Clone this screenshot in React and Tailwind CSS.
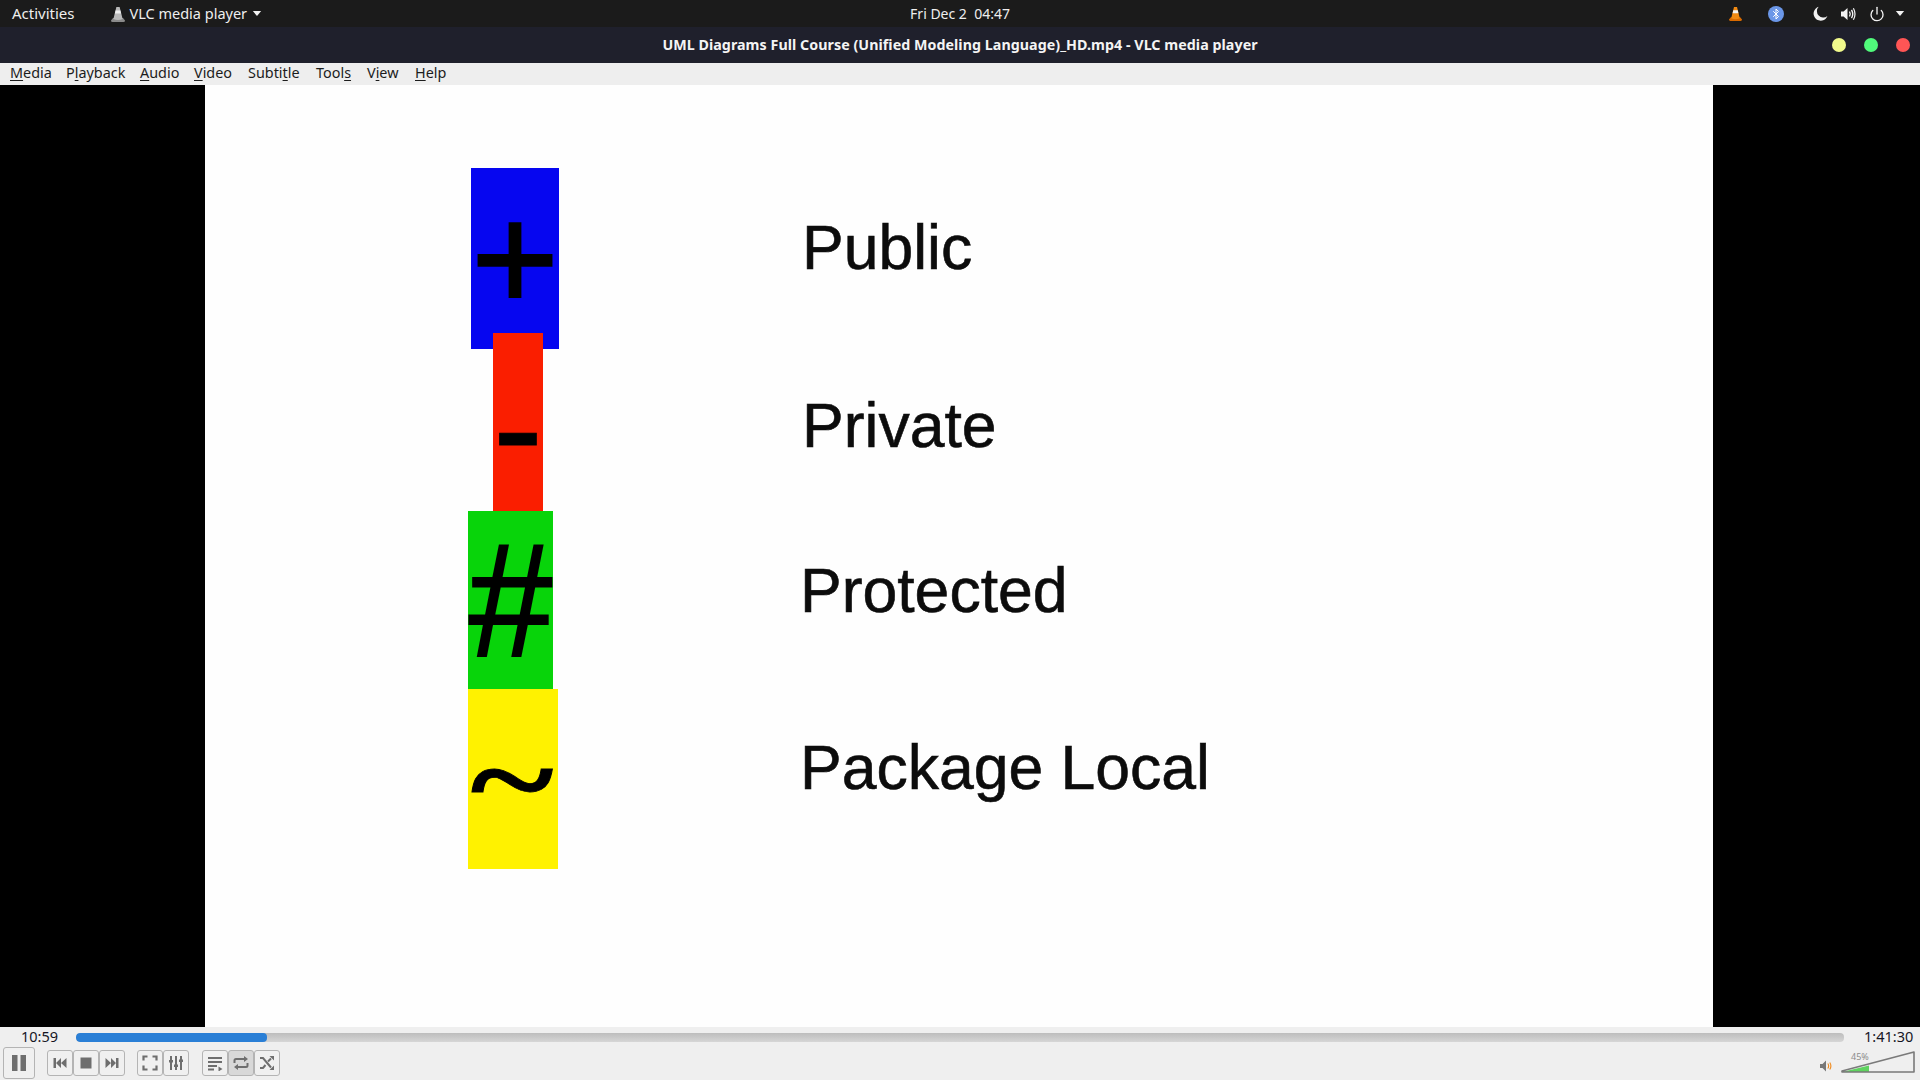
import React from "react";
import { Bluetooth, Power } from "lucide-react";

const ui = { fontFamily: '"Noto Sans", sans-serif' };

function Cone({ gray, className }) {
  const main = gray ? "#b9b9b9" : "#f28a12";
  const dark = gray ? "#8a8a8a" : "#d96a00";
  const band = gray ? "#eeeeee" : "#f4f4f4";
  return (
    <svg viewBox="0 0 16 16" className={className}>
      <path d="M1 14.5 L3 12 H13 L15 14.5 Q15 16 13.5 16 H2.5 Q1 16 1 14.5Z" fill={dark} />
      <path d="M6.4 1 H9.6 L12.6 13 Q8 15 3.4 13Z" fill={main} />
      <path d="M5.6 4.6 H10.4 L11.1 7.6 H4.9Z" fill={band} />
    </svg>
  );
}

function Caret({ className }) {
  return (
    <svg viewBox="0 0 10 6" className={className}>
      <path d="M0 0 H10 L5 6Z" fill="#f2f2f2" />
    </svg>
  );
}

function TopBar() {
  return (
    <div className="flex h-[27px] items-center bg-[#1b1b1b] text-[14.5px] text-[#eeeeee]" style={ui}>
      <div className="flex flex-1 items-center pl-[15px]">
        <span className="-ml-[3px] text-[15px]">Activities</span>
        <Cone gray className="ml-[35px] h-[16px] w-[16px]" />
        <span className="ml-[4px]">VLC media player</span>
        <Caret className="ml-[5px] h-[5px] w-[10px]" />
      </div>
      <div className="whitespace-pre text-[14px]">Fri Dec 2  04:47</div>
      <div className="flex flex-1 items-center justify-end pr-[15px]">
        <Cone className="h-[17px] w-[15px]" />
        <span className="ml-[25px] flex h-[16px] w-[16px] items-center justify-center rounded-full bg-[#6b97e8]">
          <Bluetooth size={12} color="#ffffff" strokeWidth={2} />
        </span>
        <svg viewBox="0 0 16 16" className="ml-[29px] h-[15px] w-[15px]">
          <path d="M6 0.8 A7.6 7.6 0 1 0 15.4 10.6 A6.8 6.8 0 0 1 6 0.8Z" fill="#f2f2f2" />
        </svg>
        <svg viewBox="0 0 16 16" className="ml-[12px] h-[16px] w-[16px]" fill="none" stroke="#f2f2f2">
          <path d="M1 5.5 H3.6 L7.5 2 V14 L3.6 10.5 H1Z" fill="#f2f2f2" stroke="none" />
          <path d="M9.5 5.5 Q11 8 9.5 10.5" strokeWidth="1.4" />
          <path d="M11.5 3.8 Q14 8 11.5 12.2" strokeWidth="1.4" />
          <path d="M13.4 2.2 Q16.6 8 13.4 13.8" strokeWidth="1.2" />
        </svg>
        <Power size={16} color="#f2f2f2" strokeWidth={2} className="ml-[13px]" />
        <Caret className="ml-[10px] h-[5px] w-[10px]" />
      </div>
    </div>
  );
}

function TitleBar() {
  return (
    <div className="flex h-[36px] items-center bg-[#1f202c] pb-[1px]" style={ui}>
      <div className="flex-1 pl-[10px]" />
      <div className="text-[14.25px] font-bold tracking-[0.05px] text-[#f4f4f4]">
        UML Diagrams Full Course (Unified Modeling Language)_HD.mp4 - VLC media player
      </div>
      <div className="flex flex-1 items-center justify-end gap-[18px] pr-[10px] pt-[1px]">
        <span className="h-[14px] w-[14px] rounded-full bg-[#f1fa8c]" />
        <span className="h-[14px] w-[14px] rounded-full bg-[#50fa7b]" />
        <span className="h-[14px] w-[14px] rounded-full bg-[#ff5555]" />
      </div>
    </div>
  );
}

function MenuBar() {
  const items = [
    ["", "M", "edia", 42],
    ["P", "l", "ayback", 60],
    ["", "A", "udio", 40],
    ["", "V", "ideo", 40],
    ["Subti", "t", "le", 54],
    ["Tool", "s", "", 37],
    ["V", "i", "ew", 34],
    ["", "H", "elp", 32],
  ];
  return (
    <div className="flex h-[22px] items-center gap-[14px] bg-[#eeeeee] pb-[2px] pl-[10px] text-[14.4px] text-[#1c1c1c]" style={ui}>
      {items.map(([a, b, c, w]) => (
        <span key={a + b + c} className="whitespace-nowrap" style={{ width: w }}>
          {a}
          <u className="underline-offset-2">{b}</u>
          {c}
        </span>
      ))}
    </div>
  );
}

function Block({ className, glyph, glyphClass }) {
  return (
    <div className={`relative flex items-center justify-center overflow-visible ${className}`}>
      <span className={`leading-none text-black ${glyphClass}`}>{glyph}</span>
    </div>
  );
}

function Slide() {
  const sans = { fontFamily: '"Liberation Sans", Arial, sans-serif' };
  return (
    <div className="ml-[205px] flex h-full w-[1508px] bg-[#fefefe]" style={sans}>
      <div className="flex w-[597px] flex-col pt-[83px]">
        <Block className="ml-[266px] h-[181px] w-[88px] bg-[#0606f0]" glyph="+" glyphClass="text-[150px] -mt-[2px] [-webkit-text-stroke:2px_#000]" />
        <Block className="z-10 -mt-[16px] ml-[288px] h-[178px] w-[50px] bg-[#fa1e00]" glyph="-" glyphClass="text-[150px] mt-[10px] [-webkit-text-stroke:1px_#000]" />
        <Block className="z-20 ml-[263px] h-[178px] w-[85px] bg-[#08d40a]" glyph="#" glyphClass="text-[150px] scale-y-[1.08] [-webkit-text-stroke:2px_#000]" />
        <Block className="z-20 ml-[263px] h-[180px] w-[90px] bg-[#fff200]" glyph="~" glyphClass="text-[150px] font-bold [font-family:'Liberation_Serif',serif] [-webkit-text-stroke:1px_#000] -ml-[2px] scale-x-[1.06] scale-y-[0.8]" />
      </div>
      <div className="flex flex-col pt-[127px] text-[62.5px] leading-[70px] text-[#0c0c0c] [-webkit-text-stroke:0.6px_#0c0c0c]">
        <div>Public</div>
        <div className="mt-[108px]">Private</div>
        <div className="-ml-[2px] mt-[95px]">Protected</div>
        <div className="-ml-[2px] mt-[107px]">Package Local</div>
      </div>
    </div>
  );
}

function Btn({ w = 26, h = 26, active, children }) {
  return (
    <button
      className={`flex items-center justify-center rounded-[3px] border border-[#b4b4b4] ${active ? "bg-[#d8d8d8]" : "bg-[#f0f0f0]"}`}
      style={{ width: w, height: h }}
    >
      {children}
    </button>
  );
}

const G = "#6e6e6e";
function Ico({ children }) {
  return (
    <svg viewBox="0 0 16 16" className="h-[16px] w-[16px]">
      {children}
    </svg>
  );
}

function Controls() {
  return (
    <div className="flex h-[53px] flex-col bg-[#efefef]" style={ui}>
      <div className="flex h-[20px] items-center text-[14.5px] text-[#15151f]">
        <span className="w-[76px] pl-[21px]">10:59</span>
        <div className="h-[9px] flex-1 overflow-hidden rounded-[4px] bg-gradient-to-b from-[#bdbdbd] to-[#d6d6d6]">
          <div className="h-full w-[191px] rounded-[4px] bg-[#2a7fd6]" />
        </div>
        <span className="w-[76px] pl-[20px]">1:41:30</span>
      </div>
      <div className="flex flex-1 items-center pb-[1px] pl-[3px]">
        <Btn w={32} h={32}>
          <svg viewBox="0 0 16 16" className="h-[16px] w-[16px]">
            <rect x="1" y="0" width="5.5" height="16" fill={G} />
            <rect x="9.5" y="0" width="5.5" height="16" fill={G} />
          </svg>
        </Btn>
        <div className="ml-[12px] flex">
          <Btn>
            <Ico><path d="M1.5 3 H4 V13 H1.5Z M4 8 L9 3 V13Z M9 8 L14.5 3 V13Z" fill={G} /></Ico>
          </Btn>
          <Btn>
            <Ico><rect x="2.5" y="2.5" width="11" height="11" fill={G} /></Ico>
          </Btn>
          <Btn>
            <Ico><path d="M14.5 3 H12 V13 H14.5Z M12 8 L7 3 V13Z M7 8 L1.5 3 V13Z" fill={G} /></Ico>
          </Btn>
        </div>
        <div className="ml-[12px] flex">
          <Btn>
            <Ico><path d="M1.5 5.5 V1.5 H5.5 M10.5 1.5 H14.5 V5.5 M14.5 10.5 V14.5 H10.5 M5.5 14.5 H1.5 V10.5" fill="none" stroke={G} strokeWidth="2.2" /></Ico>
          </Btn>
          <Btn>
            <Ico>
              <path d="M3 1 V15 M8 1 V15 M13 1 V15" stroke={G} strokeWidth="2" />
              <path d="M1 5 H5 V7.5 H1Z M6 9.5 H10 V12 H6Z M11 4.5 H15 V7 H11Z" fill={G} />
            </Ico>
          </Btn>
        </div>
        <div className="ml-[13px] flex">
          <Btn>
            <Ico>
              <path d="M1 3 H15 M1 7 H15 M1 11 H10 M1 14.5 H7" stroke={G} strokeWidth="1.8" />
              <path d="M11.5 11.5 L15.5 14 L11.5 16.5Z" fill={G} />
            </Ico>
          </Btn>
          <Btn active>
            <Ico>
              <path d="M1.5 8 V5.5 Q1.5 4 3 4 H12 M14.5 8 V10.5 Q14.5 12 13 12 H4" fill="none" stroke={G} strokeWidth="2" />
              <path d="M11 1 L15 4 L11 7Z M5 9 L1 12 L5 15Z" fill={G} />
            </Ico>
          </Btn>
          <Btn>
            <Ico>
              <path d="M1 3 L4 3 L12 12.5 M1 13 L4 13 L6.5 10 M9 6.5 L12 3.5" fill="none" stroke={G} strokeWidth="2" />
              <path d="M10.5 1 H15 V5.5Z M10.5 15 H15 V10.5Z" fill={G} />
            </Ico>
          </Btn>
        </div>
        <div className="ml-auto flex items-end pb-[2px] pr-[5px]">
          <svg viewBox="0 0 12 12" className="mb-[1px] h-[12px] w-[12px]">
            <path d="M0 4 H2.5 L6 0.5 V11.5 L2.5 8 H0Z" fill="#777777" />
            <path d="M7.8 3.5 Q9.5 6 7.8 8.5 M9.8 2.5 Q12 6 9.8 9.5" fill="none" stroke="#f08a1c" strokeWidth="1.1" />
          </svg>
          <div className="relative ml-[9px] h-[22px] w-[74px]">
            <svg viewBox="0 0 74 22" className="h-[22px] w-[74px]">
              <path d="M1 21 L28 21 L28 14.5 Z" fill="#5fd35f" />
              <path d="M1 20 L73 1 V21 H1 Z" fill="none" stroke="#7a7a7a" strokeWidth="1.6" strokeLinejoin="round" />
            </svg>
            <span className="absolute left-[10px] top-[0px] text-[9px] leading-[11px] text-[#8c8c8c]">45%</span>
          </div>
        </div>
      </div>
    </div>
  );
}

export default function App() {
  return (
    <div className="flex h-[1080px] w-[1920px] flex-col overflow-hidden bg-black">
      <TopBar />
      <TitleBar />
      <MenuBar />
      <div className="flex flex-1 overflow-hidden bg-black">
        <Slide />
      </div>
      <Controls />
    </div>
  );
}
